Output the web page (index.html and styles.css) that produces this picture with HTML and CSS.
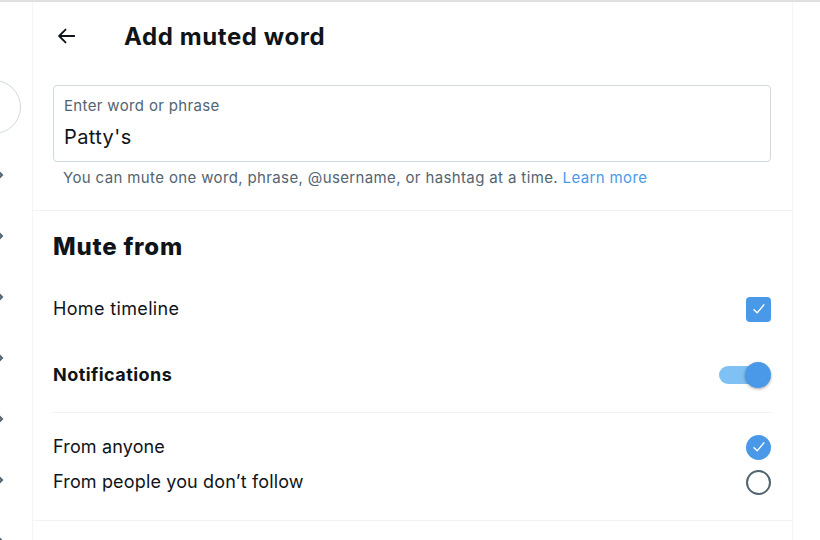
FILE: index.html
```html
<!DOCTYPE html>
<html>
<head>
<meta charset="utf-8">
<link rel="stylesheet" href="styles.css">
</head>
<body>
<div class="topbar"></div>
<div class="layout">
  <aside class="side">
    <div class="avatar"></div>
    <ul class="chevs">
      <li><svg viewBox="0 0 8 10" class="chev"><path d="M1 1l4 4-4 4" /></svg></li>
      <li><svg viewBox="0 0 8 10" class="chev"><path d="M1 1l4 4-4 4" /></svg></li>
      <li><svg viewBox="0 0 8 10" class="chev"><path d="M1 1l4 4-4 4" /></svg></li>
      <li><svg viewBox="0 0 8 10" class="chev"><path d="M1 1l4 4-4 4" /></svg></li>
      <li><svg viewBox="0 0 8 10" class="chev"><path d="M1 1l4 4-4 4" /></svg></li>
      <li><svg viewBox="0 0 8 10" class="chev"><path d="M1 1l4 4-4 4" /></svg></li>
      <li><svg viewBox="0 0 8 10" class="chev"><path d="M1 1l4 4-4 4" /></svg></li>
    </ul>
  </aside>
  <main class="main">
    <header class="header">
      <svg class="back" viewBox="0 0 24 24"><path d="M21 12H4.5M11.5 5l-7 7 7 7"/></svg>
      <h1 class="title">Add muted word</h1>
    </header>
    <section class="entry">
      <label class="field">
        <span class="field-label">Enter word or phrase</span>
        <span class="field-value">Patty's</span>
      </label>
      <p class="help">You can mute one word, phrase, @username, or hashtag at a time. <a class="link">Learn more</a></p>
    </section>
    <section class="mute">
      <h2 class="mute-title">Mute from</h2>
      <div class="row row-home">
        <span class="row-text">Home timeline</span>
        <span class="checkbox"><svg viewBox="0 0 24 24"><path d="M6 12.8l3.8 3.8 8-9.6"/></svg></span>
      </div>
      <div class="row row-notif">
        <span class="row-text bold">Notifications</span>
        <span class="toggle"><span class="knob"></span></span>
      </div>
      <div class="sub">
        <div class="row row-radio">
          <span class="row-text">From anyone</span>
          <span class="radio on"><svg viewBox="0 0 24 24"><path d="M6 12.8l3.8 3.8 8-9.6"/></svg></span>
        </div>
        <div class="row row-radio">
          <span class="row-text">From people you don’t follow</span>
          <span class="radio"></span>
        </div>
      </div>
    </section>
  </main>
</div>
</body>
</html>
```

FILE: styles.css
```css
* { box-sizing: border-box; }
html, body { margin: 0; padding: 0; background: #fff; }
body {
  font-family: Inter, "Noto Sans", "Liberation Sans", sans-serif;
  color: #0f1419;
  width: 820px;
  height: 540px;
  overflow: hidden;
  letter-spacing: 0.3px;
}
.topbar { height: 2px; background: #e0e0e0; }
.layout { display: flex; height: 538px; }
.side {
  width: 32px;
  flex: none;
  position: relative;
  overflow: hidden;
}
.avatar {
  position: absolute;
  left: -33px;
  top: 78px;
  width: 54px;
  height: 54px;
  border: 1px solid #cfd9de;
  border-radius: 50%;
}
.chevs {
  list-style: none;
  margin: 0;
  padding: 168px 0 0 0;
  display: flex;
  flex-direction: column;
  gap: 51px;
}
.chevs li { height: 10px; line-height: 0; }
.chev { width: 8px; height: 10px; margin-left: -3px; }
.chev path { fill: none; stroke: #536471; stroke-width: 2; }

.main {
  width: 761px;
  flex: none;
  border-left: 1px solid #f2f4f5;
  border-right: 1px solid #f2f4f5;
}
.header {
  height: 68px;
  display: flex;
  align-items: center;
  padding-left: 22px;
}
.back { width: 22px; height: 22px; }
.back path { fill: none; stroke: #0f1419; stroke-width: 2; stroke-linecap: round; stroke-linejoin: round; }
.title {
  margin: 0 0 0 47px;
  font-size: 24px;
  font-weight: 700;
  letter-spacing: 0.6px;
}
.entry {
  padding: 15px 21px 22px 20px;
  border-bottom: 1px solid #f0f3f4;
}
.field {
  display: flex;
  flex-direction: column;
  height: 77px;
  border: 1px solid #cfd9de;
  border-radius: 4px;
  padding: 10px 10px 0;
}
.field-label { font-size: 15px; color: #536471; line-height: 20px; letter-spacing: 0.35px; }
.field-value { font-size: 20px; line-height: 24px; margin-top: 9px; letter-spacing: 0.4px; }
.help {
  margin: 6px 0 0 10px;
  font-size: 15px;
  line-height: 20px;
  color: #536471;
  letter-spacing: 0.37px;
}
.link { color: #4a99e9; }

.mute { padding: 20px 21px 0 20px; }
.mute-title {
  margin: 0;
  font-size: 24px;
  font-weight: 800;
  line-height: 32px;
  letter-spacing: 0.8px;
}
.row {
  display: flex;
  align-items: center;
  justify-content: space-between;
}
.row-text { font-size: 18px; line-height: 24px; }
.bold { font-weight: 700; letter-spacing: 0.45px; }
.row-home { margin-top: 28px; height: 36px; }
.row-home .row-text { letter-spacing: 0.35px; }
.row-notif { margin-top: 30px; height: 36px; }
.checkbox {
  width: 25px;
  height: 25px;
  border-radius: 4px;
  background: #4a99e9;
  display: flex;
  align-items: center;
  justify-content: center;
}
.checkbox svg, .radio svg { width: 20px; height: 20px; }
.checkbox path, .radio path { fill: none; stroke: #fff; stroke-width: 1.7; stroke-linecap: round; stroke-linejoin: round; }
.toggle {
  width: 52px;
  height: 28px;
  display: flex;
  align-items: center;
  position: relative;
}
.toggle::before {
  content: "";
  width: 40px;
  height: 18px;
  border-radius: 9px;
  background: #7fc1f4;
}
.knob {
  position: absolute;
  right: 0;
  top: 1px;
  width: 26px;
  height: 26px;
  border-radius: 50%;
  background: #4a99e9;
  box-shadow: 0 1px 3px rgba(0,0,0,0.35);
}
.sub {
  margin-top: 19px;
  border-top: 1px solid #eff3f4;
  padding-top: 22px;
  padding-bottom: 27px;
  display: flex;
  flex-direction: column;
  gap: 11px;
  position: relative;
}
.row-radio { height: 24px; }
.row-radio .row-text { letter-spacing: 0.15px; }
.radio {
  width: 25px;
  height: 25px;
  border-radius: 50%;
  border: 2px solid #536471;
  display: flex;
  align-items: center;
  justify-content: center;
}
.radio.on { border: none; background: #4a99e9; }
.sub::after {
  content: "";
  position: absolute;
  left: -20px;
  right: -21px;
  bottom: 0;
  border-bottom: 1px solid #eff3f4;
}
```
